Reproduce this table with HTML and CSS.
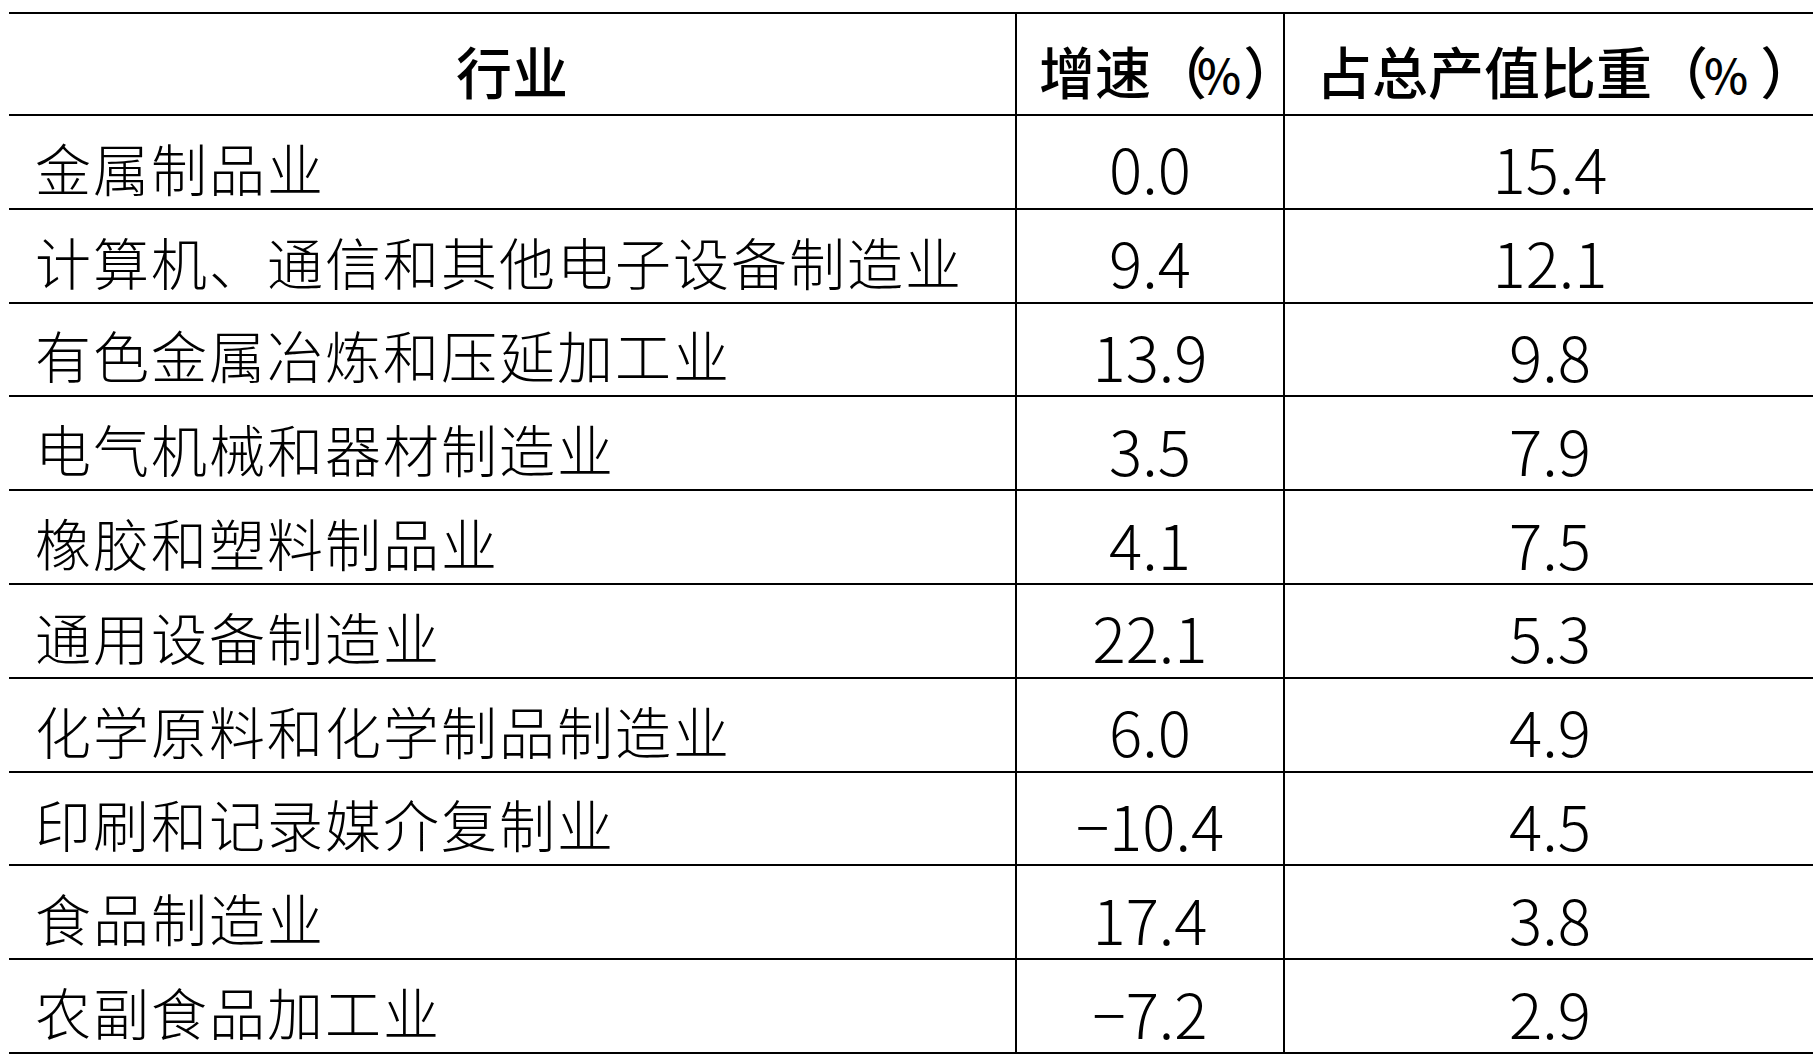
FILE: index.html
```html
<!DOCTYPE html>
<html lang="zh-CN">
<head>
<meta charset="utf-8">
<title>行业</title>
<link rel="stylesheet" href="styles.css">
</head>
<body>
<table class="stats">
  <colgroup>
    <col class="col-name">
    <col class="col-rate">
    <col class="col-share">
  </colgroup>
  <thead>
    <tr class="head">
      <th class="name-h">行业</th>
      <th class="rate rate-h">增速<span class="paren">（</span><span class="pct">%</span><span class="paren">）</span></th>
      <th class="share share-h">占总产值比重<span class="paren">（</span><span class="pct">%</span><span class="paren">）</span></th>
    </tr>
  </thead>
  <tbody>
    <tr><td class="name">金属制品业</td><td class="rate num">0.0</td><td class="share num">15.4</td></tr>
    <tr><td class="name">计算机、通信和其他电子设备制造业</td><td class="rate num">9.4</td><td class="share num">12.1</td></tr>
    <tr><td class="name">有色金属冶炼和压延加工业</td><td class="rate num">13.9</td><td class="share num">9.8</td></tr>
    <tr><td class="name">电气机械和器材制造业</td><td class="rate num">3.5</td><td class="share num">7.9</td></tr>
    <tr><td class="name">橡胶和塑料制品业</td><td class="rate num">4.1</td><td class="share num">7.5</td></tr>
    <tr><td class="name">通用设备制造业</td><td class="rate num">22.1</td><td class="share num">5.3</td></tr>
    <tr><td class="name">化学原料和化学制品制造业</td><td class="rate num">6.0</td><td class="share num">4.9</td></tr>
    <tr><td class="name">印刷和记录媒介复制业</td><td class="rate num">−10.4</td><td class="share num">4.5</td></tr>
    <tr><td class="name">食品制造业</td><td class="rate num">17.4</td><td class="share num">3.8</td></tr>
    <tr><td class="name">农副食品加工业</td><td class="rate num">−7.2</td><td class="share num">2.9</td></tr>
  </tbody>
</table>
</body>
</html>
```

FILE: styles.css
```css
html, body {
  margin: 0;
  padding: 0;
  background: #fff;
  overflow: hidden;
}

.stats {
  border-collapse: collapse;
  table-layout: fixed;
  width: 1806px;
  margin: 12px 0 0 9px;
  font-family: "Noto Sans CJK SC", "Noto Sans", sans-serif;
  color: #000;
}

.col-name { width: 1007px; }
.col-rate { width: 268px; }
.col-share { width: 531px; }

.stats th,
.stats td {
  border-top: 2px solid #000;
  border-bottom: 2px solid #000;
  padding: 0;
  white-space: nowrap;
  vertical-align: middle;
  line-height: 1;
}

.stats .rate {
  border-left: 2px solid #000;
  border-right: 2px solid #000;
}

.head {
  height: 102px;
}

.stats tbody tr {
  height: 93.8px;
}

.stats th {
  font-size: 56px;
  font-weight: 500;
  text-align: center;
  padding-top: 12px;
}

.stats .rate-h {
  text-align: left;
  padding-left: 22px;
}

.stats .share-h {
  text-align: left;
  padding-left: 31px;
}

.paren {
  letter-spacing: -14px;
}

.pct {
  display: inline-block;
  letter-spacing: 0;
  font-size: 47px;
}

.rate-h .pct { margin: 0 2px 0 4px; }
.share-h .pct { margin: 0 12px 0 10px; }

.stats .name {
  font-size: 56px;
  font-weight: 300;
  letter-spacing: 2px;
  padding-left: 26px;
  padding-top: 10px;
}

.stats .num {
  font-size: 62px;
  font-weight: 300;
  text-align: center;
  padding-top: 11px;
}
```
